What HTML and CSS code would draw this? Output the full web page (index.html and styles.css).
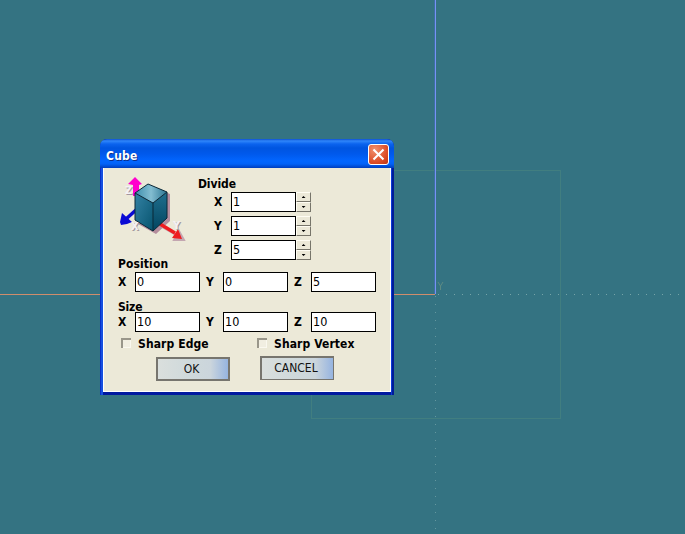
FILE: index.html
```html
<!DOCTYPE html>
<html lang="en">
<head>
<meta charset="utf-8">
<title>Cube</title>
<link rel="stylesheet" href="styles.css">
</head>
<body>
<main class="viewport">
  <svg class="scene" width="685" height="534" viewBox="0 0 685 534" fill="none">
    <rect x="311.5" y="170.5" width="249" height="248" stroke="#417e80"/>
    <path d="M438 294.5H685" stroke="#76a4a8" stroke-dasharray="1 7"/>
    <path d="M435.5 296V534" stroke="#64979f" stroke-dasharray="1 7"/>
    <path d="M0 294.5H435" stroke="#cf8d6c"/>
    <rect x="434" y="0" width="1" height="294" fill="#3d70a0"/>
    <rect x="435" y="0" width="1" height="294" fill="#7792f5"/>
    <path d="M438 282l2.500 4 2.500-4M440.500 286v4" stroke="#5d8a82"/>
  </svg>
  <section class="dialog">
    <header class="titlebar">
      <h1 class="title">Cube</h1>
      <button class="close" aria-label="Close"><svg width="13" height="13" viewBox="0 0 13 13"><path d="M1.500 1.500l10 10M11.500 1.500l-10 10" stroke="#fff" stroke-width="2.100"/></svg></button>
    </header>
    <div class="content">
      <div class="top">
        <svg class="cube" width="68" height="68" viewBox="0 0 68 68">
          <defs>
            <linearGradient id="top" x1="0" x2="1"><stop stop-color="#3c8ead"/><stop offset=".5" stop-color="#83bdd1"/><stop offset="1" stop-color="#2b7592"/></linearGradient>
            <linearGradient id="left" x1="0" y1="0" x2="1" y2="1"><stop stop-color="#3482a4"/><stop offset="1" stop-color="#07546f"/></linearGradient>
            <linearGradient id="right" x1="0" y1="0" x2="0" y2="1"><stop stop-color="#206f8e"/><stop offset="1" stop-color="#034560"/></linearGradient>
          </defs>
          <path d="M20 17l11-8 19 8v27L36 57l-18-10z" fill="#b58d9d"/>
          <path d="M42 50l14 8M59 54l5 9-10 0z" fill="#c3a6b0" stroke="#c3a6b0" stroke-width="2"/>
          <path d="M15 0l7 7-3 1v11h-6V8L8 7z" fill="#f0c"/>
          <path d="M16 33L6 42" stroke="#0a0ad4" stroke-width="3.500"/>
          <path d="M2 36l10 9-5 2-6 1-1-3z" fill="#0a0ad4"/>
          <path d="M40 47l15 9" stroke="#ee1c20" stroke-width="3.500"/>
          <path d="M58 52l4 10-10-1z" fill="#ee1c20"/>
          <path d="M15 16l13-9 19 8-14 11z" fill="url(#top)"/>
          <path d="M15 16l18 10v28L15 43z" fill="url(#left)"/>
          <path d="M33 26l14-11v26L33 54z" fill="url(#right)"/>
          <path d="M15 16l13-9 19 8v26L33 54 15 43zM15 16l18 10 14-11M33 26v28" fill="none" stroke="#0a2837"/>
          <g class="mark shade"><text x="6" y="18">Z</text><text x="12" y="54">X</text><text x="54" y="53">Y</text></g>
          <g class="mark"><text x="5" y="17">Z</text><text x="11" y="53">X</text><text x="53" y="52">Y</text></g>
        </svg>
        <div class="divide">
          <h2 class="heading">Divide</h2>
          <div class="field"><label class="axis">X</label><span class="input">1</span><span class="spinner"><i class="up"></i><i class="down"></i></span></div>
          <div class="field"><label class="axis">Y</label><span class="input">1</span><span class="spinner"><i class="up"></i><i class="down"></i></span></div>
          <div class="field"><label class="axis">Z</label><span class="input">5</span><span class="spinner"><i class="up"></i><i class="down"></i></span></div>
        </div>
      </div>
      <h2 class="heading position">Position</h2>
      <div class="triple">
        <label class="axis">X</label><span class="input">0</span>
        <label class="axis">Y</label><span class="input">0</span>
        <label class="axis">Z</label><span class="input">5</span>
      </div>
      <h2 class="heading size">Size</h2>
      <div class="triple">
        <label class="axis">X</label><span class="input">10</span>
        <label class="axis">Y</label><span class="input">10</span>
        <label class="axis">Z</label><span class="input">10</span>
      </div>
      <div class="options">
        <label class="check"><i class="box"></i><span>Sharp Edge</span></label>
        <label class="check"><i class="box"></i><span>Sharp Vertex</span></label>
      </div>
      <div class="actions">
        <button class="btn ok"><span>OK</span></button>
        <button class="btn cancel"><span>CANCEL</span></button>
      </div>
    </div>
  </section>
</main>
</body>
</html>
```
FILE: styles.css
```css
* { box-sizing: border-box; }
body { margin: 0; font: 12px/14px "DejaVu Sans Condensed", "DejaVu Sans", sans-serif; font-stretch: condensed; color: #000; }
.viewport { position: relative; width: 685px; height: 534px; background: #347382; overflow: hidden; }
.scene { display: block; }
.dialog {
  position: absolute; left: 100px; top: 139px; width: 294px; height: 256px;
  display: flex; flex-direction: column; padding: 0 3px 3px;
  background: linear-gradient(90deg, #0831c9 0 1px, #1650e0 1px 3px, transparent 3px 291px, #0b38d6 291px 292px, #001c98 292px), #0019a0;
  border-radius: 7px 7px 0 0;
}
.titlebar {
  display: flex; align-items: center; justify-content: space-between; flex: none;
  height: 29px; margin: 0 -3px; padding: 2px 5px 0 6px; border-radius: 7px 7px 0 0;
  background: linear-gradient(#0b4fd0 0, #2f86fa 2px, #0b63ee 5px, #0055e0 9px, #0059ec 15px, #0266ff 22px, #0262f7 25px, #0047cc 28px, #003dbb);
}
.title { margin: 0; padding-top: 2px; font-size: 12px; line-height: 16px; font-weight: bold; color: #fff; letter-spacing: .25px; text-shadow: 1px 1px #0a2e8a; }
.close { display: grid; place-items: center; width: 21px; height: 21px; padding: 0; border: 1px solid #fff; border-radius: 3px; background: radial-gradient(circle at 30% 25%, #f0916f, #dc4c26 65%, #bd3410); }
.content { flex: 1; background: #ece9d8; border: solid #fff; border-width: 0 1px 1px; padding: 8px 0 0 14px; }
.top { display: flex; height: 82px; }
.cube { flex: none; margin: 1px 0 0 2px; }
.mark { font-size: 11px; font-weight: bold; fill: #f4f1f3; }
.mark.shade { fill: #a3979f; }
.divide { margin: 0 0 0 10px; }
.heading { margin: 0; font-size: 12px; line-height: 14px; font-weight: bold; }
.divide .heading { padding-top: 1px; margin-bottom: 1px; letter-spacing: -.1px; }
.field { display: flex; align-items: center; height: 20px; margin-bottom: 4px; padding-left: 16px; }
.axis { flex: none; width: 17px; font-size: 12px; font-weight: bold; }
.input { flex: none; width: 65px; height: 20px; padding-left: 1px; border: 1px solid #000; background: #fff; line-height: 18px; font-size: 12.500px; }
.spinner { display: flex; flex-direction: column; width: 15px; height: 20px; }
.spinner i { display: grid; place-items: center; height: 10px; border: 1px solid; border-color: #fffdf3 #77756a #77756a #fffdf3; background: #ece9d8; }
.spinner i::after { content: ""; width: 4px; height: 2px; background: #000; clip-path: polygon(50% 0, 100% 100%, 0 100%); }
.spinner .down::after { transform: scaleY(-1); }
.position { margin-top: -1px; height: 15px; letter-spacing: .1px; }
.triple { display: flex; align-items: center; height: 20px; }
.triple .input + .axis { width: 17px; margin-left: 6px; }
.size { margin-top: 8px; height: 12px; letter-spacing: -.2px; }
.options { display: flex; height: 14px; margin-top: 4px; padding-left: 3px; }
.check { display: flex; align-items: center; flex: none; width: 136px; font-weight: bold; letter-spacing: .1px; }
.check span { padding-top: 1px; }
.box { width: 10px; height: 10px; margin-right: 7px; border: solid #99968a; border-width: 2px 0 0 2px; background: #f1eee1; box-shadow: inset -1px -1px #faf8ef; }
.actions { display: flex; padding: 6px 0 0 38px; }
.btn { width: 74px; height: 24px; padding: 0 3px 0 0; border: 2px solid #77756e; background: linear-gradient(90deg, #dadfdd 0, #cfd9db 45%, #cbd5dc 75%, #96b4e0); font: inherit; font-size: 12px; color: #111; }
.ok { margin-top: 1px; }
.cancel { margin-left: 30px; border-width: 2px 1px 1px 2px; padding-bottom: 2px; }
```
